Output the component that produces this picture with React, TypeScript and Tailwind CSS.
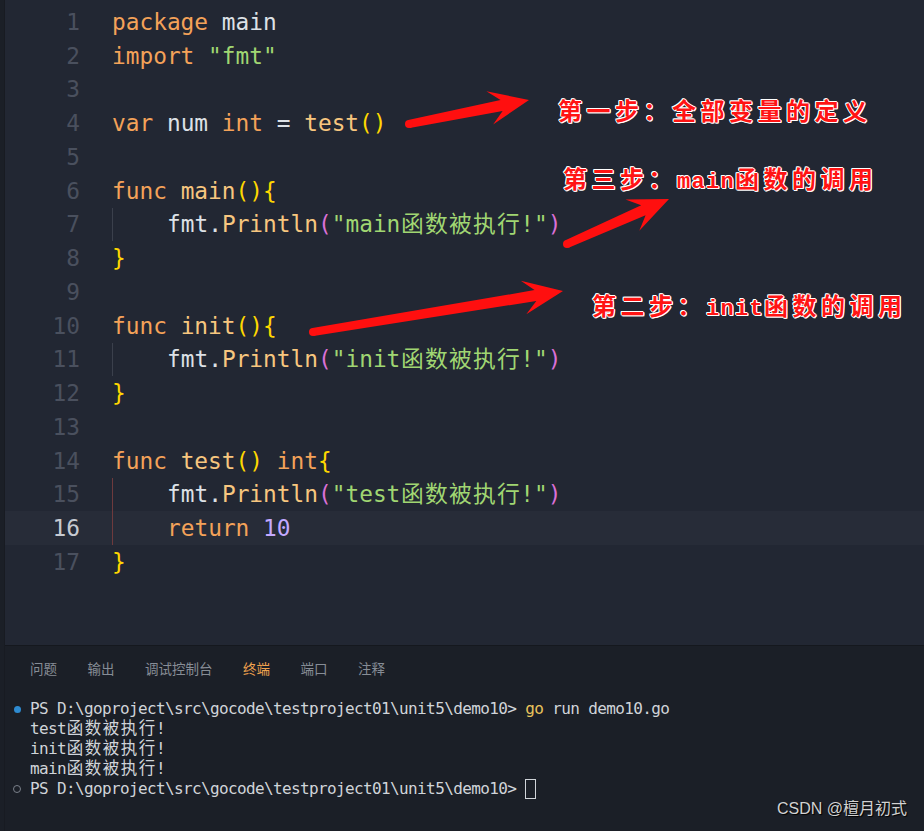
import type { ReactNode } from "react";

type Tok = [string, string];

const K = "text-[#f4a259]";
const W = "text-[#dde1e6]";
const F = "text-[#f7c67f]";
const S = "text-[#a0d672]";
const Y = "text-[#ffd700]";
const P = "text-[#da70d6]";
const N = "text-[#c3a9ff]";

type Line = { toks: Tok[]; indent?: "gray" | "red"; active?: boolean };

const lines: Line[] = [
  { toks: [["package", K], [" ", W], ["main", W]] },
  { toks: [["import", K], [" ", W], ['"fmt"', S]] },
  { toks: [] },
  { toks: [["var", K], [" num ", W], ["int", K], [" = ", W], ["test", F], ["()", Y]] },
  { toks: [] },
  { toks: [["func", K], [" ", W], ["main", F], ["(){", Y]] },
  { toks: [["fmt.", W], ["Println", F], ["(", P], ['"main函数被执行!"', S], [")", P]], indent: "gray" },
  { toks: [["}", Y]] },
  { toks: [] },
  { toks: [["func", K], [" ", W], ["init", F], ["(){", Y]] },
  { toks: [["fmt.", W], ["Println", F], ["(", P], ['"init函数被执行!"', S], [")", P]], indent: "gray" },
  { toks: [["}", Y]] },
  { toks: [] },
  { toks: [["func", K], [" ", W], ["test", F], ["()", Y], [" ", W], ["int", K], ["{", Y]] },
  { toks: [["fmt.", W], ["Println", F], ["(", P], ['"test函数被执行!"', S], [")", P]], indent: "red" },
  { toks: [["return", K], [" ", W], ["10", N]], indent: "red", active: true },
  { toks: [["}", Y]] },
];

// CJK characters get a fixed cell width so they line up like the editor does
function Mixed({ text, cell }: { text: string; cell: string }) {
  const out: ReactNode[] = [];
  let buf = "";
  Array.from(text).forEach((ch, i) => {
    if (ch.charCodeAt(0) > 0x2e80) {
      if (buf) out.push(buf);
      buf = "";
      out.push(
        <span key={i} className={`inline-block text-center ${cell}`}>
          {ch}
        </span>
      );
    } else {
      buf += ch;
    }
  });
  if (buf) out.push(buf);
  return <>{out}</>;
}

const arrows = [
  [409, 124, 529, 100],
  [567, 244, 669, 199],
  [313, 332, 563, 291],
];

function arrowPath(x1: number, y1: number, x2: number, y2: number) {
  const dx = x2 - x1;
  const dy = y2 - y1;
  const len = Math.hypot(dx, dy);
  const ux = dx / len;
  const uy = dy / len;
  const nx = -uy;
  const ny = ux;
  const L = 40;
  const Wd = 17;
  const neck = 28;
  const wt = 4;
  const wn = 5.5;
  const p = (d: number, o: number) =>
    `${(x2 - ux * d + nx * o).toFixed(1)},${(y2 - uy * d + ny * o).toFixed(1)}`;
  return `M${p(len, wt)} L${p(neck, wn)} L${p(L, Wd)} L${x2},${y2} L${p(L, -Wd)} L${p(neck, -wn)} L${p(len, -wt)} Z`;
}

const tabs = ["问题", "输出", "调试控制台", "终端", "端口", "注释"];

const prompt = "PS D:\\goproject\\src\\gocode\\testproject01\\unit5\\demo10>";

const labelCls =
  "absolute whitespace-nowrap font-['Noto_Sans_CJK_SC',sans-serif] text-[24px] font-bold leading-[30px] tracking-[4.5px] text-[#ff1414] [text-shadow:1px_0_0_#fff,-1px_0_0_#fff,0_1px_0_#fff,0_-1px_0_#fff,1px_1px_0_#fff,-1px_-1px_0_#fff]";
const latinCls = "font-['Liberation_Mono',monospace] text-[22px] font-bold tracking-[1.3px]";

export default function App() {
  return (
    <div className="relative flex h-[831px] w-[924px] overflow-hidden bg-[#222733]">
      <div className="w-[5px] shrink-0 border-r border-[#181b22] bg-[#1b1f27]" />

      <div className="flex min-w-0 flex-1 flex-col">
        {/* editor */}
        <div className="h-[645px] shrink-0 pt-[5px] font-['DejaVu_Sans_Mono','Noto_Sans_CJK_SC',monospace] text-[22.8px]">
          {lines.map((ln, i) => (
            <div
              key={i}
              className={`flex h-[33.75px] ${ln.active ? "bg-[#272c38]" : ""}`}
            >
              <div
                className={`w-[75px] self-center text-right ${
                  ln.active ? "text-[#c6cad1]" : "text-[#4a505e]"
                }`}
              >
                {i + 1}
              </div>
              <div className="ml-[32px] flex whitespace-pre">
                {ln.indent && (
                  <span
                    className={`w-[55px] border-l ${
                      ln.indent === "red" ? "border-[#6e3a3d]" : "border-[#3b404c]"
                    }`}
                  />
                )}
                <span className="self-center">
                  {ln.toks.map(([t, c], j) => (
                    <span key={j} className={c}>
                      <Mixed text={t} cell="w-[24px]" />
                    </span>
                  ))}
                </span>
              </div>
            </div>
          ))}
        </div>

        {/* panel */}
        <div className="flex-1 border-t border-[#15181e] bg-[#1b1f27]">
          <div className="flex h-[44px] items-center gap-[30.5px] pl-[25px] font-['Noto_Sans_CJK_SC',sans-serif] text-[13.5px]">
            {tabs.map((t) => (
              <span
                key={t}
                className={t === "终端" ? "text-[#f0a24e]" : "text-[#878d96]"}
              >
                {t}
              </span>
            ))}
          </div>

          <div className="pt-[9px] font-['DejaVu_Sans_Mono','Noto_Sans_CJK_SC',monospace] text-[16px] leading-[20px] tracking-[-0.63px] text-[#d0d4d9]">
            <div className="flex">
              <div className="flex w-[25px] items-center justify-end pr-[9px]">
                <span className="size-[7px] rounded-full bg-[#2e8bd1]" />
              </div>
              <span className="whitespace-pre">
                {prompt} <span className="text-[#e9c35c]">go</span> run demo10.go
              </span>
            </div>
            {["test", "init", "main"].map((n) => (
              <div key={n} className="whitespace-pre pl-[25px]">
                <Mixed text={`${n}函数被执行!`} cell="w-[18px] text-[16.5px] tracking-normal" />
              </div>
            ))}
            <div className="flex">
              <div className="flex w-[25px] items-center justify-end pr-[9px]">
                <span className="size-[8px] rounded-full border border-[#7a808a]" />
              </div>
              <span className="whitespace-pre">{prompt} </span>
              <span className="h-[20px] w-[11px] border border-[#d0d4d9]" />
            </div>
          </div>
        </div>
      </div>

      {/* annotations drawn over the screenshot */}
      <svg className="pointer-events-none absolute inset-0" width="924" height="831">
        {arrows.map(([x1, y1, x2, y2], i) => (
          <g key={i} fill="#ff0f0f">
            <path d={arrowPath(x1, y1, x2, y2)} />
            <circle cx={x1} cy={y1} r={4} />
          </g>
        ))}
      </svg>

      <div className={`${labelCls} left-[558px] top-[95px]`}>第一步：全部变量的定义</div>
      <div className={`${labelCls} left-[563px] top-[163px]`}>
        第三步：<span className={latinCls}>main</span>函数的调用
      </div>
      <div className={`${labelCls} left-[592px] top-[290px]`}>
        第二步：<span className={latinCls}>init</span>函数的调用
      </div>

      <div className="absolute right-[17px] bottom-[10px] font-['Liberation_Sans','Noto_Sans_CJK_SC',sans-serif] text-[16px] text-[#d2d2d2] [text-shadow:1px_1px_1px_#000]">
        CSDN @檀月初式
      </div>
    </div>
  );
}
